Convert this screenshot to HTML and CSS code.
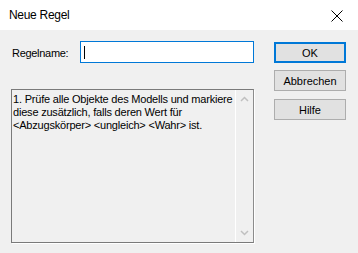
FILE: index.html
```html
<!DOCTYPE html>
<html>
<head>
<meta charset="utf-8">
<link rel="stylesheet" href="styles.css">
</head>
<body>
<div class="dialog">
  <div class="titlebar">
    <span class="title">Neue Regel</span>
    <svg class="close" width="12" height="12" viewBox="0 0 12 12"><path d="M0.5 0.5 L11.5 11.5 M11.5 0.5 L0.5 11.5" stroke="#000" stroke-width="1" fill="none"/></svg>
  </div>
  <div class="content">
    <div class="left">
      <div class="namerow">
        <span class="label">Regelname:</span>
        <div class="input"><span class="caret"></span></div>
      </div>
      <div class="textbox">
        <div class="text">1. Prüfe alle Objekte des Modells und markiere diese zusätzlich, falls deren Wert für &lt;Abzugskörper&gt; &lt;ungleich&gt; &lt;Wahr&gt; ist.</div>
        <div class="scrollbar">
          <svg class="arrow" width="9" height="6" viewBox="0 0 9 6"><path d="M1 5 L4.5 1.5 L8 5" stroke="#c0c0c0" stroke-width="1.5" fill="none"/></svg>
          <svg class="arrow" width="9" height="6" viewBox="0 0 9 6"><path d="M1 1 L4.5 4.5 L8 1" stroke="#c0c0c0" stroke-width="1.5" fill="none"/></svg>
        </div>
      </div>
    </div>
    <div class="buttons">
      <div class="btn default">OK</div>
      <div class="btn">Abbrechen</div>
      <div class="btn help">Hilfe</div>
    </div>
  </div>
</div>
</body>
</html>
```
FILE: styles.css
```css
* {
  box-sizing: border-box;
}
html, body {
  margin: 0;
  padding: 0;
  background: #f0f0f0;
}
.dialog {
  width: 358px;
  height: 253px;
  font-family: "Liberation Sans", Arial, sans-serif;
  font-size: 11px;
  color: #000;
}
.titlebar {
  height: 30px;
  background: #fff;
  display: flex;
  align-items: center;
  justify-content: space-between;
  padding: 0 15px 0 9px;
}
.title {
  font-size: 12px;
  letter-spacing: -0.3px;
  padding-bottom: 1px;
}
.close {
  display: block;
  margin-top: 2px;
}
.content {
  display: flex;
  padding: 11px 0 0 11px;
}
.left {
  width: 243px;
}
.namerow {
  display: flex;
  align-items: center;
  height: 22px;
}
.label {
  width: 69px;
  padding-left: 1px;
  padding-top: 1px;
  letter-spacing: -0.3px;
}
.input {
  width: 174px;
  height: 22px;
  background: #fff;
  border: 1px solid #0078d7;
  display: flex;
  align-items: center;
  padding-left: 3px;
}
.caret {
  width: 1px;
  height: 13px;
  background: #000;
}
.textbox {
  margin-top: 26px;
  height: 154px;
  border: 1px solid #7a7a7a;
  border-right-color: #8c8c8c;
  box-shadow: 1px 1px 0 #fff;
  display: flex;
}
.text {
  flex: 1;
  padding: 3px 0 0 1px;
  line-height: 13px;
  letter-spacing: -0.2px;
}
.scrollbar {
  width: 18px;
  border-left: 1px solid #fff;
  display: flex;
  flex-direction: column;
  justify-content: space-between;
  align-items: center;
  padding: 6px 0 6px;
}
.arrow {
  display: block;
}
.buttons {
  margin-left: 20px;
  width: 72px;
  padding-top: 1px;
  display: flex;
  flex-direction: column;
  gap: 7px;
}
.btn {
  height: 21px;
  border: 1px solid #adadad;
  background: #e1e1e1;
  display: flex;
  align-items: center;
  justify-content: center;
}
.btn.default {
  border: 2px solid #0078d7;
}
.btn.help {
  margin-top: 1px;
}
```
